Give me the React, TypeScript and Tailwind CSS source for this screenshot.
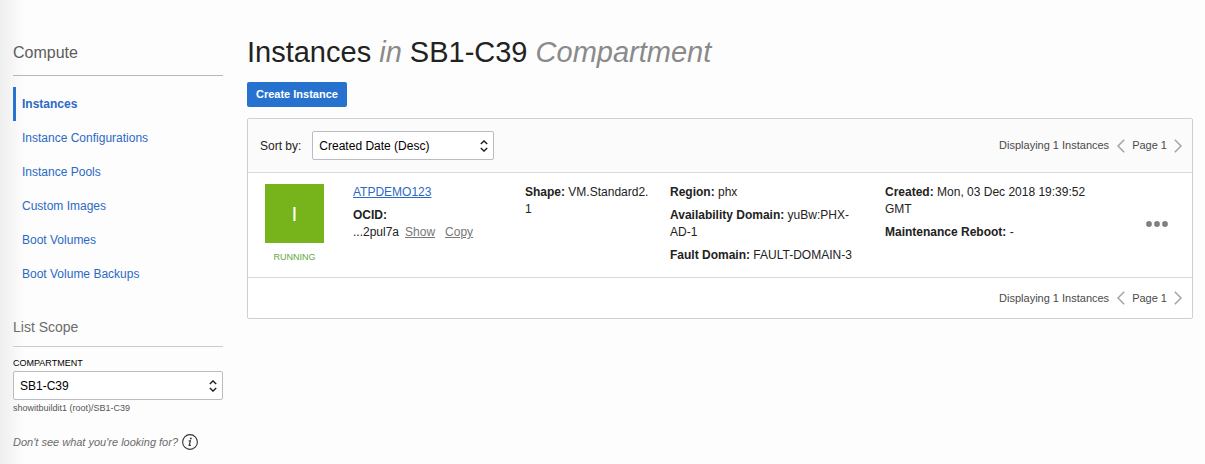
import type { ReactNode } from "react";

const navItems = [
  "Instances",
  "Instance Configurations",
  "Instance Pools",
  "Custom Images",
  "Boot Volumes",
  "Boot Volume Backups",
];

function SelectBox({ id, value, className }: { id: string; value: string; className: string }) {
  return (
    <div className={`relative ${className}`}>
      <select
        id={id}
        defaultValue={value}
        className="block h-[29px] w-full appearance-none rounded-xs border border-[#b9bcc3] bg-white pr-6 pl-1.5 text-[12px] text-black"
      >
        <option>{value}</option>
      </select>
      <svg
        viewBox="0 0 8 12"
        className="pointer-events-none absolute top-[9px] right-1.5 h-3 w-2"
        fill="none"
        stroke="#222"
        strokeWidth="1.4"
        aria-hidden="true"
      >
        <path d="M0.8 4 4 0.9 7.2 4M0.8 8 4 11.1 7.2 8" />
      </svg>
    </div>
  );
}

function Pager() {
  return (
    <div className="flex items-center text-[11px] text-[#4a4a4a]">
      <span>Displaying 1 Instances</span>
      <button type="button" aria-label="Previous page" className="ml-2 text-[#a3a3a3]">
        <svg viewBox="0 0 8 14" className="block h-3.5 w-2" fill="none" stroke="currentColor" strokeWidth="1.5">
          <path d="M7.2 0.7 1 7l6.2 6.3" />
        </svg>
      </button>
      <span className="mx-[7px]">Page 1</span>
      <button type="button" aria-label="Next page" className="text-[#a3a3a3]">
        <svg viewBox="0 0 8 14" className="block h-3.5 w-2" fill="none" stroke="currentColor" strokeWidth="1.5">
          <path d="M0.8 0.7 7 7l-6.2 6.3" />
        </svg>
      </button>
    </div>
  );
}

function Field({ label, children }: { label: string; children: ReactNode }) {
  return (
    <p>
      <strong>{label}:</strong> {children}
    </p>
  );
}

function Sidebar() {
  return (
    <aside className="w-[210px] shrink-0">
      <h2 className="border-b border-[#b5b7c3] pb-2.5 text-[16px] leading-6 text-[#5c5c5c]">Compute</h2>
      <nav className="mt-[11px]">
        <ul>
          {navItems.map((item, i) => (
            <li key={item}>
              <a
                href="#"
                aria-current={i === 0 ? "page" : undefined}
                className={
                  i === 0
                    ? "block border-l-3 border-[#2a72cf] pl-1.5 text-[12px] leading-[34px] font-bold text-[#2c69c6]"
                    : "block border-l-3 border-transparent pl-1.5 text-[12px] leading-[34px] text-[#2c69c6]"
                }
              >
                {item}
              </a>
            </li>
          ))}
        </ul>
      </nav>
      <h3 className="mt-6 border-b border-[#c9cbd0] pb-[7px] text-[14px] leading-6 text-[#6c6c6c]">List Scope</h3>
      <label htmlFor="compartment" className="mt-2.5 block pb-0.5 text-[9px] leading-3 text-black">
        COMPARTMENT
      </label>
      <SelectBox id="compartment" value="SB1-C39" className="w-full" />
      <p className="mt-0.5 text-[9px] leading-3 text-[#555]">showitbuildit1 (root)/SB1-C39</p>
      <p className="mt-5 flex items-center gap-1 text-[11px] text-[#6b6b6b] italic">
        Don't see what you're looking for?
        <button type="button" aria-label="Help">
          <svg viewBox="0 0 16 16" className="block size-4" fill="none" stroke="#333" aria-hidden="true">
            <circle cx="8" cy="8" r="7.4" strokeWidth="1.1" />
            <path d="M6.7 6.9h1.7L7.2 11.4h1.7" strokeWidth="1.2" />
            <circle cx="8.8" cy="4.5" r="0.9" fill="#333" stroke="none" />
          </svg>
        </button>
      </p>
    </aside>
  );
}

export default function App() {
  return (
    <div className="min-h-screen bg-[#fdfdfd] bg-linear-to-r from-[#eeeeee] to-[#fdfdfd] to-[24px] font-['Liberation_Sans',Arial,sans-serif] text-[#222]">
      <div className="flex gap-6 pr-3 pb-3 pl-[13px]">
        <div className="pt-[41px]">
          <Sidebar />
        </div>
        <main className="min-w-0 flex-1 pt-[34px]">
          <h1 className="text-[29px] leading-9 text-[#222]">
            Instances <em className="text-[#8a8a8a]">in</em> SB1-C39 <em className="text-[#8a8a8a]">Compartment</em>
          </h1>
          <button
            type="button"
            className="mt-3 block h-[25px] rounded-xs bg-[#2772cf] px-[9px] text-[11px] font-bold text-white"
          >
            Create Instance
          </button>
          <section className="mt-[11px] rounded-xs border border-[#cdd0d6] bg-white">
            <div className="flex items-center justify-between border-b border-[#d8dade] bg-[#fbfbfb] py-3 pr-2.5 pl-3">
              <div className="flex items-center gap-[11px]">
                <label htmlFor="sort" className="text-[12px]">
                  Sort by:
                </label>
                <SelectBox id="sort" value="Created Date (Desc)" className="w-[182px]" />
              </div>
              <Pager />
            </div>
            <article className="grid grid-cols-[88px_172fr_145fr_215fr_215fr_68px] border-b border-[#d8dade] pt-[11px] pr-6 pb-[13px] pl-[17px] text-[12px] leading-[17px]">
              <div className="flex w-[59px] flex-col items-center">
                <div className="flex size-[59px] items-center justify-center bg-[#77b31b] text-[21px] text-white">I</div>
                <span className="mt-2 text-[9px] leading-3 text-[#5fa83a]">RUNNING</span>
              </div>
              <div className="flex flex-col gap-1.5">
                <p>
                  <a href="#" className="text-[#2c69c6] underline">
                    ATPDEMO123
                  </a>
                </p>
                <div>
                  <strong className="block">OCID:</strong>
                  <div className="flex">
                    <span>...2pul7a</span>
                    <button type="button" className="ml-1.5 text-[#777] underline">
                      Show
                    </button>
                    <button type="button" className="ml-2.5 text-[#777] underline">
                      Copy
                    </button>
                  </div>
                </div>
              </div>
              <div className="pr-5 break-all">
                <Field label="Shape">VM.Standard2.1</Field>
              </div>
              <div className="flex flex-col gap-1.5 pr-5">
                <Field label="Region">phx</Field>
                <Field label="Availability Domain">yuBw:PHX-AD-1</Field>
                <Field label="Fault Domain">FAULT-DOMAIN-3</Field>
              </div>
              <div className="flex flex-col gap-1.5">
                <Field label="Created">Mon, 03 Dec 2018 19:39:52 GMT</Field>
                <Field label="Maintenance Reboot">-</Field>
              </div>
              <div className="flex items-center justify-end">
                <button type="button" aria-label="Actions">
                  <svg viewBox="0 0 22 6" className="block h-1.5 w-[22px]" fill="#808080" aria-hidden="true">
                    <circle cx="3" cy="3" r="2.9" />
                    <circle cx="11" cy="3" r="2.9" />
                    <circle cx="19" cy="3" r="2.9" />
                  </svg>
                </button>
              </div>
            </article>
            <div className="flex h-10 items-center justify-end pr-2.5">
              <Pager />
            </div>
          </section>
        </main>
      </div>
    </div>
  );
}
